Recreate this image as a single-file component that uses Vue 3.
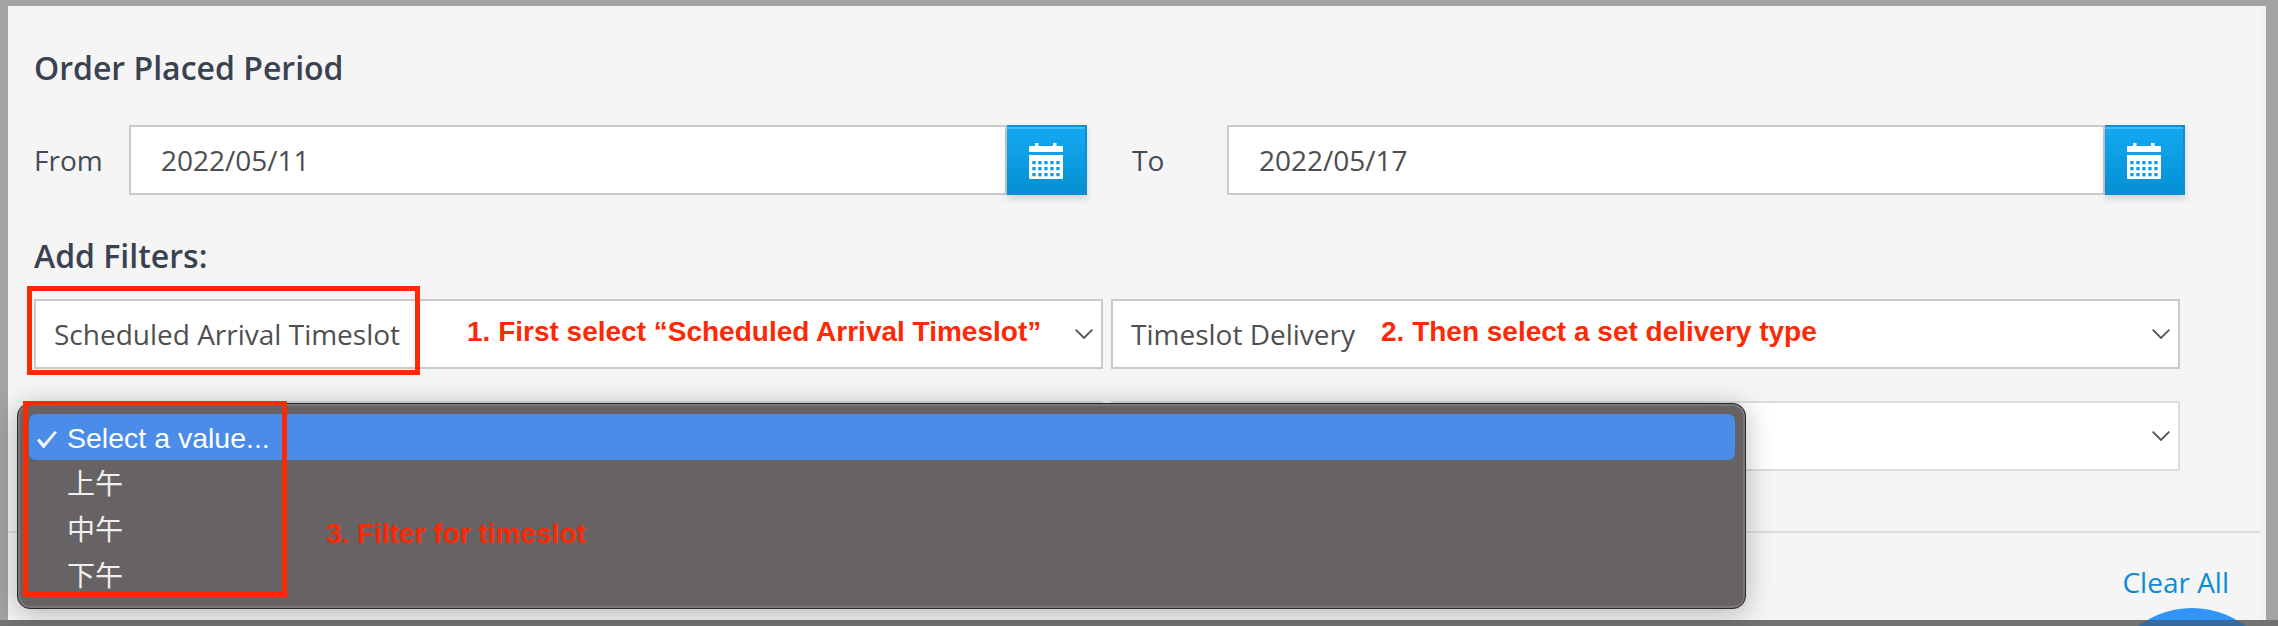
<script setup>
const options = ['上午', '中午', '下午']
const cells = [0, 1, 2, 3, 4]
const rows = [0, 1, 2]
</script>

<template>
  <div class="page">
    <main class="panel">
      <h2 class="title">Order Placed Period</h2>
      <div class="dates">
        <div v-for="d in [{ l: 'From', v: '2022/05/11' }, { l: 'To', v: '2022/05/17' }]" :key="d.l" class="date-field">
          <label class="date-label">{{ d.l }}</label>
          <div class="date-input">{{ d.v }}</div>
          <button class="cal-btn" type="button" aria-label="Open calendar">
            <svg width="34" height="36" viewBox="0 0 34 36">
              <rect x="6" y="0" width="3.5" height="4" fill="#fff" />
              <rect x="24" y="0" width="3.5" height="4" fill="#fff" />
              <path d="M1 3h32a1 1 0 0 1 1 1v5H0V4a1 1 0 0 1 1-1zM0 12h34v23a1 1 0 0 1-1 1H1a1 1 0 0 1-1-1z" fill="#fff" />
              <template v-for="r in rows" :key="r">
                <rect v-for="c in cells" :key="c" :x="3.3 + c * 6" :y="18 + r * 6" width="3.3" height="3.3" fill="#0f9de4" />
              </template>
            </svg>
          </button>
        </div>
      </div>

      <h2 class="title filters-title">Add Filters:</h2>
      <div class="filters">
        <div class="select">
          <span>Scheduled Arrival Timeslot</span>
          <svg class="chev" width="18" height="10" viewBox="0 0 18 10"><path d="M.7.7 9 9 17.3.7" fill="none" stroke="#555" stroke-width="1.8" /></svg>
        </div>
        <div class="select">
          <span>Timeslot Delivery</span>
          <svg class="chev" width="18" height="10" viewBox="0 0 18 10"><path d="M.7.7 9 9 17.3.7" fill="none" stroke="#555" stroke-width="1.8" /></svg>
        </div>
        <div class="select pale"></div>
        <div class="select pale">
          <span></span>
          <svg class="chev" width="18" height="10" viewBox="0 0 18 10"><path d="M.7.7 9 9 17.3.7" fill="none" stroke="#555" stroke-width="1.8" /></svg>
        </div>
      </div>

      <footer class="footer">
        <a class="clear">Clear All</a>
      </footer>
    </main>

    <div class="fab"></div>
    <div class="base-strip"></div>

    <div class="menu">
      <div class="item active">
        <svg class="check" width="20" height="17" viewBox="0 0 20 17"><path d="M0 9.5 2.4 7.4l4.6 5L17.6 0 20 1.2 7.2 17H6z" fill="#f2f5fb" /></svg>
        Select a value...
      </div>
      <div v-for="o in options" :key="o" class="item">{{ o }}</div>
    </div>

    <div class="mark mark-one"></div>
    <div class="mark mark-two"></div>
    <span class="note note-one">1. First select “Scheduled Arrival Timeslot”</span>
    <span class="note note-two">2. Then select a set delivery type</span>
    <span class="note note-three">3. Filter for timeslot</span>
  </div>
</template>

<style scoped>
.page {
  position: relative;
  width: 2278px;
  height: 626px;
  box-sizing: border-box;
  padding: 6px 12px 6px 8px;
  overflow: hidden;
  background: #a3a3a3;
  font-family: "Open Sans", "Noto Sans", sans-serif;
}
.panel {
  height: 614px;
  box-sizing: border-box;
  padding-top: 42px;
  background: #f5f5f5;
  border-right: 6px solid #f1f1f1;
}
.title {
  margin: 0 0 0 26px;
  font-size: 32px;
  line-height: 40px;
  font-weight: 600;
  color: #3a4250;
}
.dates {
  display: flex;
  gap: 45px;
  margin: 37px 75px 0 26px;
}
.date-field {
  flex: 1;
  display: flex;
  height: 70px;
}
.date-label {
  width: 95px;
  flex: none;
  align-self: center;
  font-size: 28px;
  line-height: 40px;
  color: #444b57;
}
.date-input {
  flex: 1;
  display: flex;
  align-items: center;
  box-sizing: border-box;
  padding-left: 30px;
  background: #fff;
  border: 2px solid #cacaca;
  font-size: 28px;
  color: #4d4d4f;
}
.cal-btn {
  flex: none;
  display: flex;
  align-items: center;
  justify-content: center;
  width: 80px;
  height: 70px;
  padding: 0;
  box-sizing: border-box;
  border: 0;
  border-top: 2px solid #0d8fd0;
  border-right: 2px solid #0d8fd0;
  background: linear-gradient(#14a8f2, #0490d2);
  box-shadow: inset 0 2px 0 #4ebaf1, 0 4px 7px rgba(0, 0, 0, 0.14);
}
.filters-title {
  margin-top: 41px;
}
.filters {
  display: grid;
  grid-template-columns: 1069px 1069px;
  column-gap: 8px;
  row-gap: 32px;
  margin: 23px 0 0 26px;
}
.select {
  display: flex;
  align-items: center;
  justify-content: space-between;
  box-sizing: border-box;
  height: 70px;
  padding: 0 8px 0 18px;
  background: #fff;
  border: 2px solid #cacaca;
  font-size: 28px;
  color: #4f4f50;
}
.select.pale {
  border-color: #dedede;
}
.chev {
  flex: none;
}
.footer {
  display: flex;
  justify-content: flex-end;
  margin-top: 60px;
  padding: 29px 31px 0 0;
  border-top: 2px solid #dddddd;
}
.clear {
  font-size: 28px;
  line-height: 40px;
  color: #0a8bd8;
}
.fab {
  position: absolute;
  left: 2103px;
  top: 608px;
  width: 178px;
  height: 178px;
  border-radius: 50%;
  background: #3094f9;
}
.base-strip {
  position: absolute;
  left: 0;
  right: 0;
  top: 620px;
  height: 6px;
  background: rgba(60, 60, 60, 0.47);
}
.menu {
  position: absolute;
  left: 17px;
  top: 403px;
  width: 1729px;
  height: 206px;
  box-sizing: border-box;
  padding: 10px 10px 0 11px;
  background: #676364;
  border: 1px solid #2b2929;
  border-radius: 13px;
  box-shadow: inset 0 0 0 2px #7b7778, 0 4px 28px rgba(0, 0, 0, 0.28);
}
.item {
  position: relative;
  height: 46px;
  padding-left: 38px;
  font-family: "Liberation Sans", "Noto Sans CJK SC", sans-serif;
  font-size: 28px;
  line-height: 49px;
  color: #f0eeee;
}
.item.active {
  background: #4a8ce8;
  border-radius: 7px;
  font-size: 28.5px;
  color: #fff;
}
.check {
  position: absolute;
  left: 8px;
  top: 17px;
}
.mark {
  position: absolute;
  box-sizing: border-box;
  border: 5px solid #fb2a05;
}
.mark-one {
  left: 27px;
  top: 286px;
  width: 393px;
  height: 89px;
}
.mark-two {
  left: 23px;
  top: 401px;
  width: 264px;
  height: 196px;
}
.note {
  position: absolute;
  font-family: "Liberation Sans", sans-serif;
  font-size: 28px;
  line-height: 30px;
  font-weight: 700;
  white-space: nowrap;
  color: #fb2a05;
}
.note-one {
  left: 467px;
  top: 317px;
}
.note-two {
  left: 1381px;
  top: 317px;
}
.note-three {
  left: 326px;
  top: 519px;
}
</style>
